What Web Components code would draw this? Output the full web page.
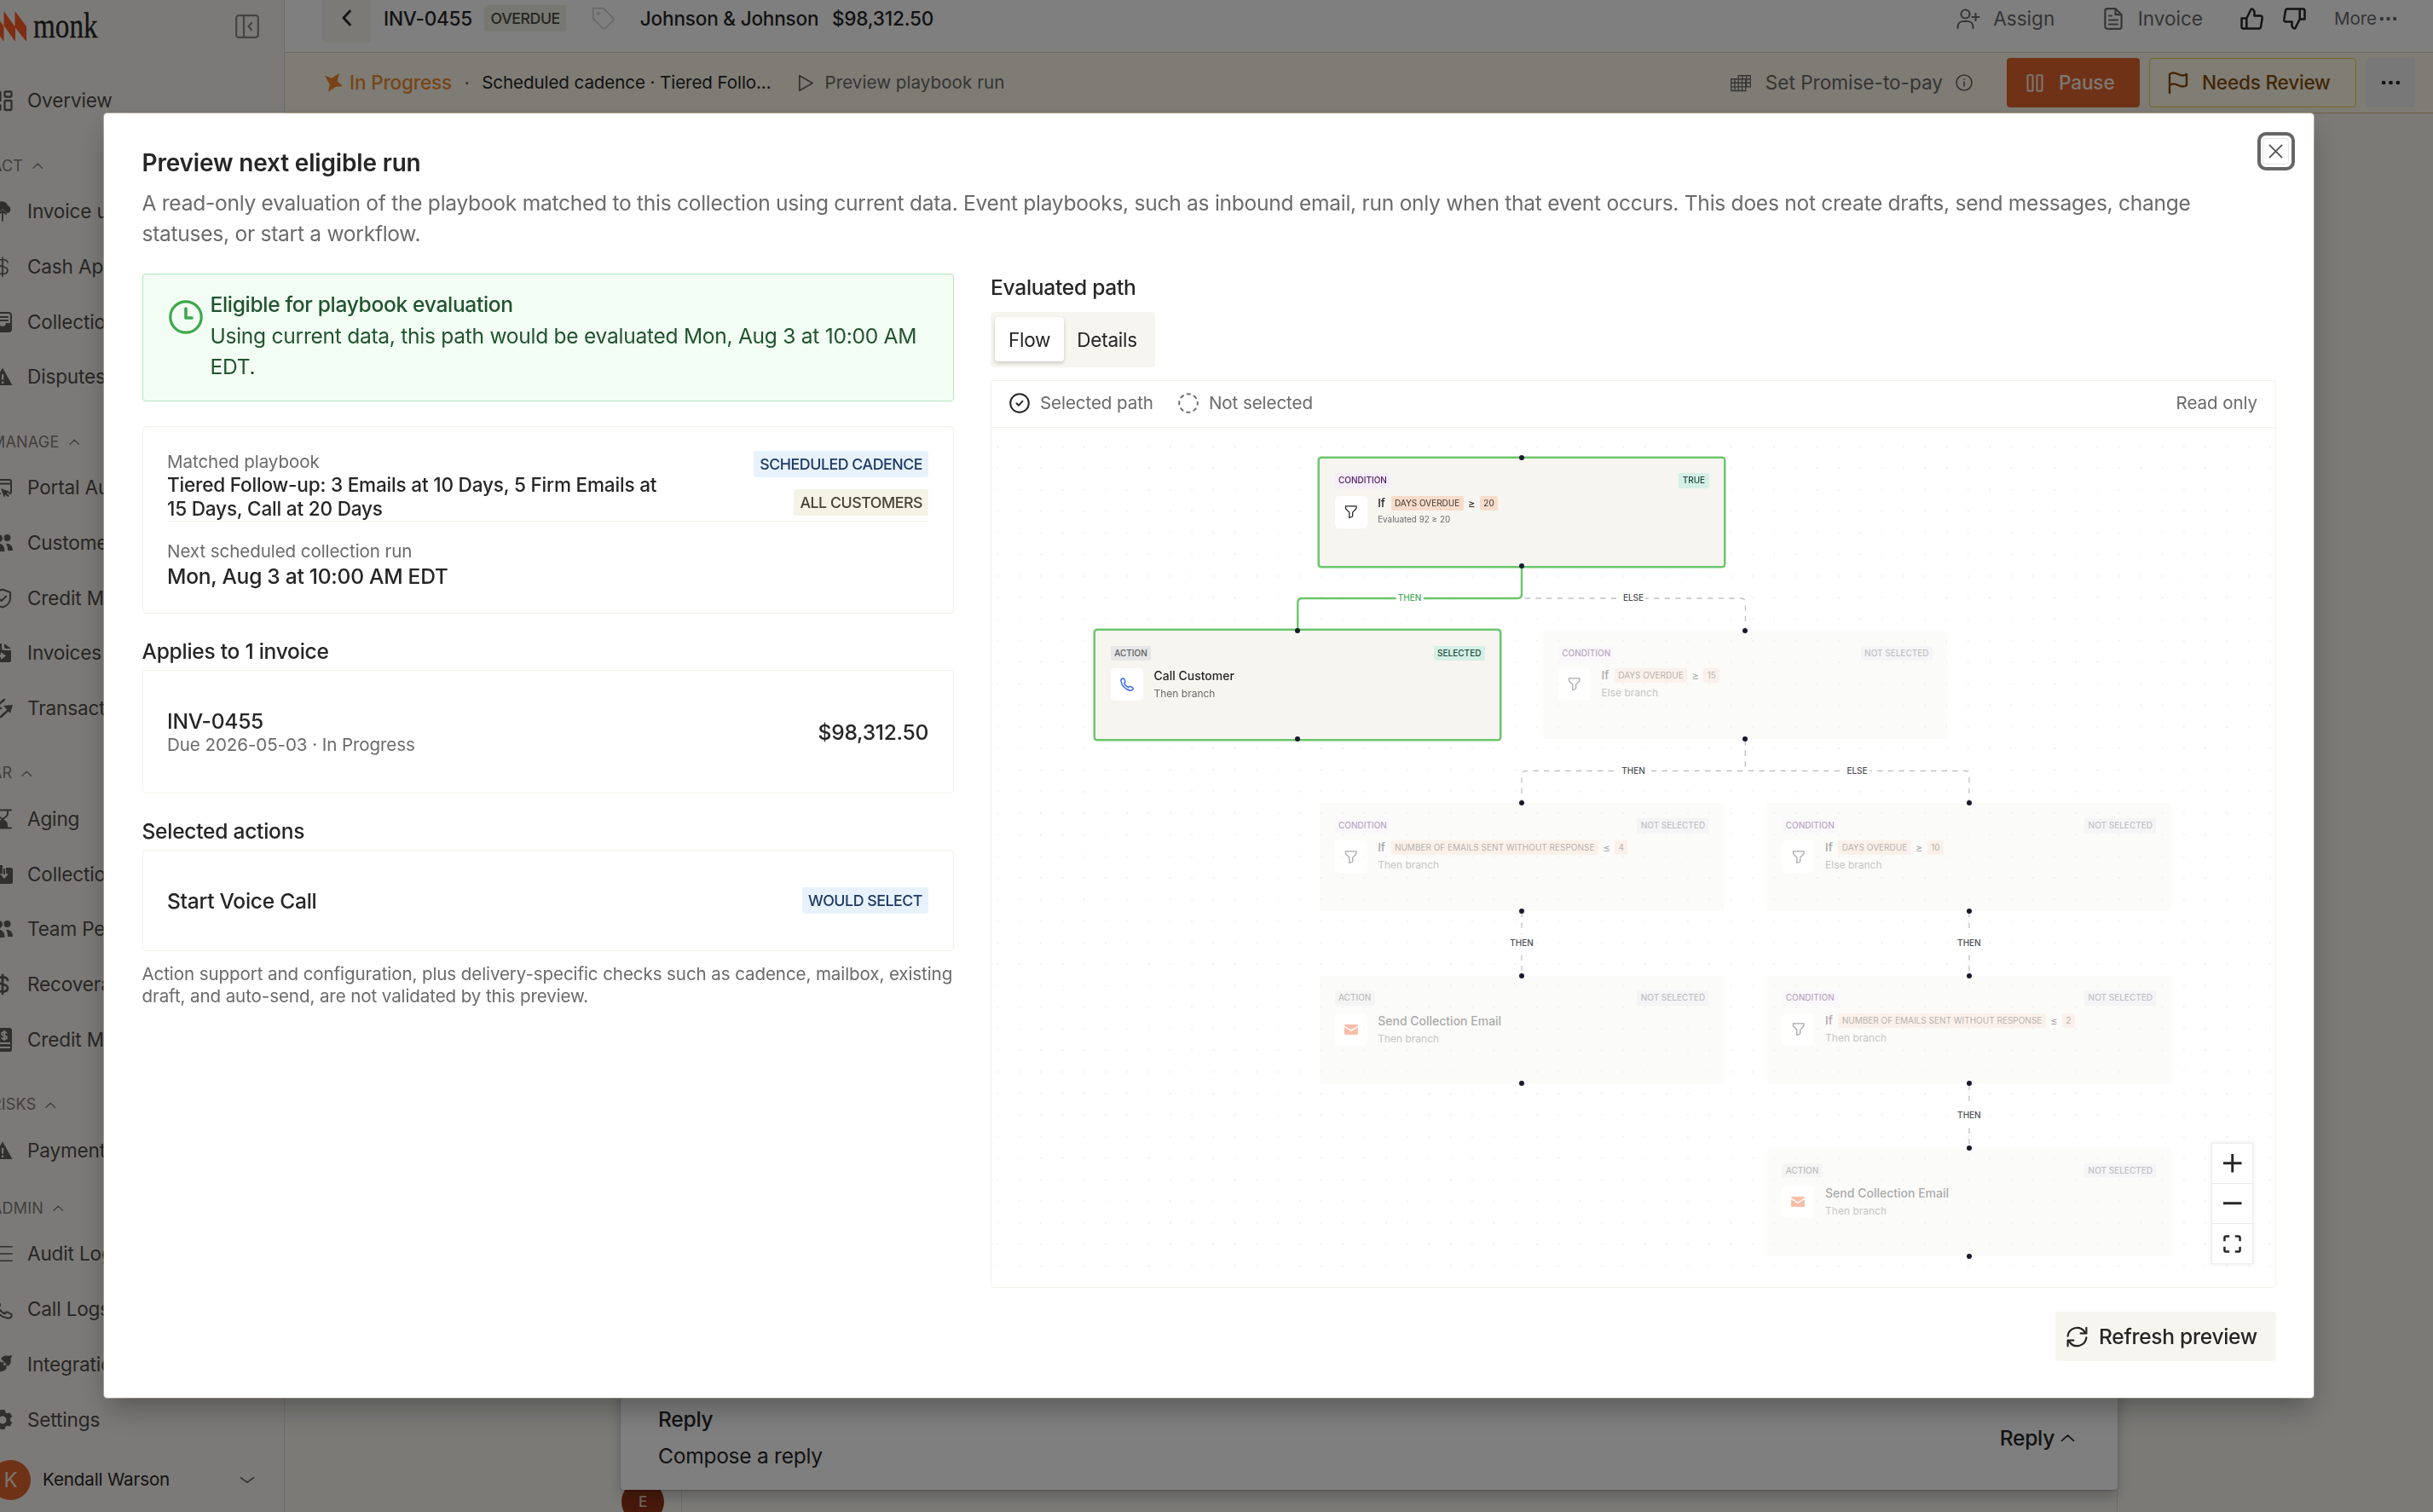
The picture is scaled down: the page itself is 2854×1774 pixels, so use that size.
<!DOCTYPE html>
<html lang="en">
<head>
<meta charset="utf-8">
<title>Monk</title>
<style>
  html, body { margin: 0; height: 100%; overflow: hidden; background: #f8f7f3; }
  body { font: 400 24.6px/36px Inter, sans-serif; letter-spacing: -.29px; color: #262626; }
</style>
</head>
<body>
<monk-app></monk-app>

<script>
/* Icon set: [viewBox, markup] */
const S = 'fill="none" stroke="currentColor" stroke-linecap="round" stroke-linejoin="round"';
const ICONS = {
  up: ['0 0 24 24', `<path ${S} stroke-width="2.6" d="M2 18 12 7l10 11"/>`],
  down: ['0 0 24 24', `<path ${S} stroke-width="3" d="M2 7l10 10L22 7"/>`],
  back: ['0 0 24 24', `<path ${S} stroke-width="2.8" d="M15.5 4 8 12l7.5 8"/>`],
  panel: ['0 0 28 28', `<g ${S} stroke-width="2.2"><rect x="1.2" y="1.2" width="25.6" height="25.6" rx="3"/><path d="M10 1.5v25M19 10l-3.5 4 3.5 4"/></g>`],
  grid: ['0 0 24 24', `<g ${S} stroke-width="2.3"><rect x="1.5" y="1.5" width="8" height="11" rx="1"/><rect x="14.5" y="1.5" width="8" height="6" rx="1"/><rect x="1.5" y="17" width="8" height="6" rx="1"/><rect x="14.5" y="12" width="8" height="11" rx="1"/></g>`],
  cloud: ['0 0 24 24', `<path fill="currentColor" d="M6 14a5 5 0 0 1-1-9.8A7 7 0 0 1 18 5a5 5 0 0 1 1 9h-2l-5-5-5 5z"/><path ${S} stroke-width="1.8" d="M12 23V11m-4 4 4-4 4 4"/>`],
  dollar: ['0 0 24 24', `<path ${S} stroke-width="1.7" d="M12 1v22M18 7c-.5-2-2.500-3.500-6-3.500S6 5 6 7.500c0 5.500 12 3 12 8.500 0 3-2.500 4.500-6 4.500S6 19 5.500 16.500"/>`],
  dollarBold: ['0 0 24 24', `<path ${S} stroke-width="2.800" d="M12 1v22M18 7c-.5-2-2.500-3.500-6-3.500S6 5 6 7.500c0 5.500 12 3 12 8.500 0 3-2.500 4.500-6 4.500S6 19 5.500 16.500"/>`],
  inbox: ['0 0 24 24', `<rect ${S} stroke-width="2" x="2" y="1" width="20" height="22" rx="3"/><path ${S} stroke-width="2" d="M6 6h12M6 10h12"/><path fill="currentColor" d="M2 13h6c1 3 2 4 4 4s3-1 4-4h6v8l-2 2H4l-2-2z"/>`],
  warn: ['0 0 24 24', `<path fill="currentColor" fill-rule="evenodd" d="M12 1.500 23.500 22H.5zM11 9v6.500h2.200V9zm0 8.500V20h2.200v-2.500z"/>`],
  browser: ['0 0 24 24', `<path ${S} stroke-width="2" d="M9 19H3a2 2 0 0 1-2-2V5a2 2 0 0 1 2-2h17a2 2 0 0 1 2 2v12a2 2 0 0 1-2 2M1 7.500h21"/><path fill="currentColor" d="m10 13 11 4-4 1.800 3 3-1.500 1.500-3-3L14 24z"/>`],
  people: ['0 0 24 24', `<g fill="currentColor"><circle cx="7.500" cy="6.500" r="4.500"/><circle cx="17.500" cy="6" r="4"/><path d="M0 22c0-6 3-9 7.500-9s7 3 7 9zM16 13c5-1 8 3 8 8h-6c0-4-.5-6-2-8z"/></g>`],
  shield: ['0 0 24 24', `<path ${S} stroke-width="2" d="m12 1.500 9 3.500v7c0 5-4 9-9 10.500C7 21 3 17 3 12V5zM7.500 12l3.200 3 5.500-5.500"/>`],
  files: ['0 0 24 24', `<path fill="currentColor" fill-rule="evenodd" d="M3 1h8v5c0 2 1 3 3 3h8v12c0 1-1 2-2 2H5c-1 0-2-1-2-2zm7 10v3H5v3h5v3l6-4.500zM14 1l8 6h-6c-1 0-2-1-2-2z"/>`],
  swap: ['0 0 24 24', `<g ${S} stroke-width="2.600"><path d="M2 12 14 2M3 5v7h7M10 22 21 12"/></g><path fill="currentColor" d="m13 9 11-1-3 10z"/>`],
  hourglass: ['0 0 24 24', `<g ${S} stroke-width="2"><path d="M2 1.500h20M2 22.500h20M6 2v3c0 4 3 5 6 7 3-2 6-3 6-7V2"/></g><path fill="currentColor" d="M12 12c4 2 6 3 6 8v2H6v-2c0-5 2-6 6-8z"/>`],
  collect: ['0 0 24 24', `<path fill="currentColor" fill-rule="evenodd" d="M2 4h5l2-3h3v10H9l5 6 5-6h-3V4h6c1 0 2 1 2 2v15c0 1-1 2-2 2H2c-1 0-2-1-2-2V6c0-1 1-2 2-2zm11 1h2v7h-2z"/>`],
  memo: ['0 0 24 28', `<path fill="currentColor" fill-rule="evenodd" d="M4 0h16a3 3 0 0 1 3 3v22a3 3 0 0 1-3 3H4a3 3 0 0 1-3-3V3a3 3 0 0 1 3-3zM4 17v2h17v-2zm0 5v2h17v-2z"/><path fill="none" stroke="#f5f2ed" stroke-width="1.800" d="M14 3v12M17 6.500C16.500 5.300 15.500 5 14 5s-3 .7-3 2c0 3 6 1.500 6 4.200 0 1.500-1.300 2-3 2s-2.700-.7-3-2"/>`],
  lines: ['0 0 24 24', `<path ${S} stroke-width="1.900" d="M1 3h22M1 12h22M1 21h22"/>`],
  phone: ['0 0 24 24', `<path ${S} stroke-width="2" d="M4.500 1.500C2.500 2 1 4 1.500 7 3 14.500 10 21.500 17.500 22.500c3 .4 5-1 5.300-3.200 0-.8-.3-1.400-.9-1.700l-4-2c-.8-.4-1.600-.2-2.100.4l-1.300 1.500C11.500 16 8.500 13 7 9.800l1.500-1.400c.5-.6.7-1.300.4-2L7 2.300c-.4-.8-1.400-1.100-2.500-.8z"/>`],
  plug: ['0 0 24 24', `<path fill="currentColor" d="M11 4c3-3 6-2.500 8-2l3-1 1 1-1.500 3c.5 2 1 5-2 8l-1 1L10 5z"/><path fill="currentColor" d="m8 7 3 3 1.500-1.500L14 10l-1.500 1.500 2 2L16 12l1.500 1.500-1.500 1.500 1 1c-3 4-6 5-9.500 4L4 23l-3-3 2.500-3.500C2.500 13 4 10 8 7z"/>`],
  gear: ['0 0 24 24', `<path fill="currentColor" fill-rule="evenodd" d="M9.500 0h5l1 3.200 2 1 3.200-.8 2.500 4.300-2.200 2.500v2.600l2.200 2.500-2.500 4.300-3.200-.8-2 1-1 3.200h-5l-1-3.200-2-1-3.200.8-2.500-4.300L3 12.800v-2.600L.8 7.700l2.500-4.300 3.200.8 2-1zM12 7.500a4.500 4.500 0 1 0 0 9 4.500 4.500 0 0 0 0-9z"/>`],
  tag: ['0 0 24 24', `<path ${S} stroke-width="1.500" d="M1.500 1.500h9.500c.8 0 1.500.3 2 .8l9 9c1 1 1 2.400 0 3.400l-7.300 7.300c-1 1-2.400 1-3.400 0l-9-9c-.5-.5-.8-1.200-.8-2z"/><circle cx="7" cy="7" r="1.700" fill="currentColor"/>`],
  assign: ['0 0 28 24', `<g ${S} stroke-width="2.200"><circle cx="10.500" cy="6.500" r="5"/><path d="M1.500 23v-1.500c0-4 3-6.500 7-6.500h4c4 0 7 2.500 7 6.500V23M22.500 6v8M18.500 10h8"/></g>`],
  doc: ['0 0 22 26', `<g ${S} stroke-width="2.200"><path d="M13.500 1.200H4a2.600 2.600 0 0 0-2.600 2.600v18.400A2.600 2.600 0 0 0 4 24.800h14a2.600 2.600 0 0 0 2.600-2.600V8.300zM13.500 1.200v7h7M6 9.500h3M6 14.500h10M6 19.500h10"/></g>`],
  thumb: ['0 0 27 26', `<path ${S} stroke-width="2.500" d="M1.500 12.500h5.800v12H3.500a2 2 0 0 1-2-2zM7.300 12.500 12.800 1.500c2 0 3.700 1.600 3.700 3.700V9.500h7c1.500 0 2.500 1.300 2.200 2.700l-1.700 10.400c-.2 1.100-1.100 1.900-2.200 1.900H7.300"/>`],
  star: ['0 0 22 22', `<path fill="currentColor" d="m1 2.500 8 3.200L18 0l-2.300 9L22 15l-8.500 1L5 22l1.800-9z"/>`],
  play: ['0 0 20 22', `<path ${S} stroke-width="2" d="M2 1.800 18 11 2 20.200z"/>`],
  calendar: ['0 0 24 18', `<g fill="none" stroke="currentColor" stroke-width="1.300"><path d="M.7 4.500h17v13h-17zM.7 8.800h17M.7 13.200h17M5 4.500v13M9.200 4.500v13M13.500 4.500v13M9.200 4.500V.7h14.100v12.500h-5.600M17.700 4.500h5.600M17.700 8.800h5.600M14 .7v4M18.700 .7v12"/></g>`],
  info: ['0 0 20 20', `<circle cx="10" cy="10" r="9" ${S} stroke-width="1.700"/><path ${S} stroke-width="1.700" d="M10 9v5M10 5.800v.2"/>`],
  pause: ['0 0 20 22', `<g ${S} stroke-width="2"><rect x="1.500" y="1.200" width="6" height="19.500" rx="1"/><rect x="12.500" y="1.200" width="6" height="19.500" rx="1"/></g>`],
  flag: ['0 0 24 26', `<path ${S} stroke-width="2.400" d="M2 25V3c3-2 6-2 10 0s7 2 10 0v13c-3 2-6 2-10 0s-7-2-10 0"/>`],
  dots: ['0 0 22 6', `<g fill="currentColor"><circle cx="3" cy="3" r="2.300"/><circle cx="11" cy="3" r="2.300"/><circle cx="19" cy="3" r="2.300"/></g>`],
  close: ['0 0 18 18', `<path ${S} stroke-width="2" d="m1.500 1.500 15 15m0-15-15 15"/>`],
  clock: ['0 0 40 40', `<circle cx="20" cy="20" r="18.200" ${S} stroke-width="3.200"/><path ${S} stroke-width="3.600" d="M20 10v11h7"/>`],
  check: ['0 0 24 24', `<circle cx="12" cy="12" r="10.800" ${S} stroke-width="2"/><path ${S} stroke-width="2" d="m8.500 12.300 2.500 2.400 4.500-5"/>`],
  dashed: ['0 0 24 24', `<circle cx="12" cy="12" r="10.800" fill="none" stroke="currentColor" stroke-width="1.900" stroke-dasharray="5 3.480" stroke-dashoffset="2.500"/>`],
  funnel: ['0 0 16 16', `<path ${S} stroke-width="1.300" d="M1.500 1h13v1.800c0 .8-.3 1.300-.8 1.800L10 8.400v5L6 15V8.400L2.300 4.600c-.5-.5-.8-1-.8-1.800z"/>`],
  mail: ['0 0 16 12', `<path fill="currentColor" d="M1.500 0h13c.8 0 1.500.6 1.500 1.400L8 6.200 0 1.400C0 .6.700 0 1.500 0z"/><path fill="currentColor" d="M0 3.200 8 8l8-4.800v7.300c0 .8-.7 1.500-1.500 1.500h-13C.7 12 0 11.300 0 10.500z"/>`],
  refresh: ['0 0 26 26', `<g ${S} stroke-width="2.300"><path d="M24.300 1.800v7h-7M1.700 24.200v-7h7"/><path d="M1.700 12A11.300 11.300 0 0 1 22 6.500l2 2M24.300 14A11.300 11.300 0 0 1 4 19.500l-2-2"/></g>`],
  plus: ['0 0 22 22', `<path fill="none" stroke="currentColor" stroke-width="3" d="M11 0v22M0 11h22"/>`],
  minus: ['0 0 22 22', `<path fill="none" stroke="currentColor" stroke-width="3" d="M0 11h22"/>`],
  expand: ['0 0 22 22', `<path fill="none" stroke="currentColor" stroke-width="2.600" d="M1.500 7.500v-4q0-2 2-2h4M14.500 1.500h4q2 0 2 2v4M20.500 14.500v4q0 2-2 2h-4M7.500 20.500h-4q-2 0-2-2v-4"/>`],
  logo: ['0 0 39 36', `<path fill="currentColor" d="M0 0l12.500 18v18L0 18zM12.500 0 26 19v17L12.500 17zM25.500 0 39 18v18L25.500 19z"/>`],
};

class Base extends HTMLElement {
  connectedCallback() {
    if (this.shadowRoot) return;
    this.attachShadow({ mode: 'open' }).innerHTML =
      `<style>*{box-sizing:border-box}:host{box-sizing:border-box}${this.css()}</style>${this.html()}`;
  }
  a(n, d = '') { return this.getAttribute(n) ?? d; }
  css() { return ''; }
  html() { return '<slot></slot>'; }
}
const def = (n, c) => customElements.define(n, c);

/* <ui-icon name w h> */
def('ui-icon', class extends Base {
  css() { return `:host{display:block;flex:none;width:${this.a('w', 24)}px;height:${this.a('h', this.a('w', 24))}px}svg{display:block;width:100%;height:100%;overflow:visible}`; }
  html() { const [vb, m] = ICONS[this.a('name')]; return `<svg viewBox="${vb}" preserveAspectRatio="none">${m}</svg>`; }
});

/* Uppercase pill label */
def('ui-badge', class extends Base {
  css() {
    const [bg, fg] = { blue: ['#e8f2fd', '#1e3a63'], olive: ['#f4f3e6', '#45463a'], grey: ['#eff0e3', '#4b4d42'] }[this.a('tone')];
    return `:host{display:block;flex:none;height:31px;padding:0 7px 0 7.500px;border-radius:3px;background:${bg};color:${fg};font:500 17.800px/31px Inter,sans-serif;letter-spacing:-.48px;white-space:nowrap}`;
  }
});

/* ---------- Sidebar ---------- */
def('nav-item', class extends Base {
  css() { return `:host{display:flex;align-items:center;height:64.750px;margin-left:-9px;color:#5f5e5b}
    ui-icon{margin-right:17px}span{font:400 22.600px/30px Inter,sans-serif;letter-spacing:-.17px;color:#4f4e4b;white-space:nowrap}`; }
  html() { return `<ui-icon name="${this.a('icon')}" w="24" h="${this.a('ih', 24)}"></ui-icon><span><slot></slot></span>`; }
});
def('nav-group', class extends Base {
  css() { return `:host{display:block}
    .h{display:flex;align-items:center;gap:11px;height:57px;padding-top:14.500px;margin-left:-10px;color:#81807b;font:400 18px/24px Inter,sans-serif;letter-spacing:.2px}`; }
  html() { return `<div class="h"><span>${this.a('label')}</span><ui-icon name="up" w="12.500" h="11"></ui-icon></div><slot></slot>`; }
});
def('app-sidebar', class extends Base {
  css() { return `:host{display:flex;flex-direction:column;flex:none;width:334px;height:1774px;background:#f9f5f0;border-right:1px solid #dedbd3;overflow:hidden}
    .top{display:flex;align-items:center;height:62px;padding-right:29px}
    .logo{color:#ff5a24;margin-left:-8px}
    .name{flex:1;font:400 42px/44px "Liberation Serif",serif;letter-spacing:0;color:#262626}
    .name b{display:inline-block;font-weight:400;transform:translateY(-1px) scaleX(.79);transform-origin:0 50%;margin-left:7.500px;-webkit-text-stroke:.35px #262626}
    .col{color:#8a8985}
    nav{margin-top:24px}
    .sp{margin-top:8px}
    .user{display:flex;align-items:center;height:47px;margin:14.500px 34px 0 -11px;font:400 20.600px/30px Inter,sans-serif;letter-spacing:-.14px;color:#262626}
    .av{width:47px;height:47px;border-radius:50%;background:#e0642c;color:#f5e8e0;text-align:center;font:400 24px/47px Inter,sans-serif;margin-right:14px}
    .user span{flex:1}`; }
  html() {
    const it = (i, t, h = 24) => `<nav-item icon="${i}" ih="${h}">${t}</nav-item>`;
    return `<div class="top"><ui-icon class="logo" name="logo" w="39" h="36"></ui-icon><span class="name"><b>monk</b></span><ui-icon class="col" name="panel" w="28"></ui-icon></div>
    <nav>${it('grid', 'Overview')}
    <nav-group class="sp" label="ACT">${it('cloud', 'Invoice uploads')}${it('dollar', 'Cash Application')}${it('inbox', 'Collections')}${it('warn', 'Disputes')}</nav-group>
    <nav-group class="sp" label="MANAGE">${it('browser', 'Portal Automation')}${it('people', 'Customers')}${it('shield', 'Credit Management')}${it('files', 'Invoices')}${it('swap', 'Transactions')}</nav-group>
    <nav-group class="sp" label="AR">${it('hourglass', 'Aging')}${it('collect', 'Collections')}${it('people', 'Team Performance')}${it('dollarBold', 'Recoverables')}${it('memo', 'Credit Memos', 28)}</nav-group>
    <nav-group class="sp" label="RISKS">${it('warn', 'Payment Risk')}</nav-group>
    <nav-group label="ADMIN">${it('lines', 'Audit Logs', 22)}${it('phone', 'Call Logs')}${it('plug', 'Integrations')}${it('gear', 'Settings')}</nav-group></nav>
    <div class="user"><div class="av">K</div><span>Kendall Warson</span><ui-icon name="down" w="18" h="13" style="color:#6a6966"></ui-icon></div>`;
  }
});

/* ---------- Page header ---------- */
def('page-header', class extends Base {
  css() { return `:host{display:block;flex:none}
    .r{display:flex;align-items:center;white-space:nowrap}
    .a{height:62px;background:#fff;border-bottom:1px solid #dccfb8;font:500 22.600px/30px Inter,sans-serif;letter-spacing:-.22px;padding:0 42px 18px 44px;color:#262626}
    .back{width:57px;height:64px;margin-top:-8px;padding-top:6px;display:flex;align-items:center;justify-content:center;background:#f6f4ef;border-radius:4px;margin-right:15px}
    .mut{color:#6b6b6b;font-weight:400;letter-spacing:-.02px}
    .b{height:71px;background:#fdf8ea;border-bottom:1px solid #e5bf8c;font:400 22.600px/30px Inter,sans-serif;padding:0 21px 0 46px;color:#262626}
    .s{font-size:20.600px;letter-spacing:-.1px}
    .f{flex:1}
    .pause,.rev,.m{display:flex;align-items:center;height:58px;border-radius:4px}
    .pause{background:#e0642c;color:#fbeee7;width:156px;padding-left:23px;font-weight:500;letter-spacing:-.15px}
    .rev{width:243px;margin-left:11px;padding-left:21px;border:1px solid #e8d43c;background:#fffbe9;color:#854d0e;font-weight:500;letter-spacing:-.22px}
    .m{width:58px;margin-left:11px;justify-content:center;background:#f1f1f3}`; }
  html() { return `<div class="r a"><div class="back"><ui-icon name="back" w="24"></ui-icon></div><span>INV-0455</span>
      <ui-badge tone="grey" style="margin-left:14px">OVERDUE</ui-badge>
      <ui-icon name="tag" w="27" h="27" style="margin:0 30px 0 30px;color:#cfcfd4"></ui-icon>
      <span>Johnson &amp; Johnson</span><span style="margin-left:15.500px">$98,312.50</span><span class="f"></span>
      <ui-icon name="assign" w="28" h="24" style="color:#6b6b6b;margin-right:15.500px"></ui-icon><span class="mut">Assign</span>
      <ui-icon name="doc" w="22" h="26" style="color:#6b6b6b;margin:0 18px 0 57.500px"></ui-icon><span class="mut">Invoice</span>
      <ui-icon name="thumb" w="27" h="26" style="margin-left:44px"></ui-icon><ui-icon name="thumb" w="27" h="26" style="margin:0 33px 0 23px;transform:rotate(180deg)"></ui-icon>
      <span class="mut s">More</span><ui-icon name="dots" w="21" h="6" style="color:#6b6b6b;margin-left:3px"></ui-icon></div>
    <div class="r b"><ui-icon name="star" w="22" style="color:#f0862c;margin-right:8px"></ui-icon><span style="color:#ef8b33;font-weight:500;letter-spacing:-.2px">In Progress</span>
      <span style="margin:0 14.500px;color:#6b6b6b">·</span><span class="s">Scheduled cadence · Tiered Follo...</span>
      <ui-icon name="play" w="19" h="21" style="color:#6b6b6b;margin:0 13px 0 31px"></ui-icon><span class="mut s" style="letter-spacing:.04px">Preview playbook run</span><span class="f"></span>
      <ui-icon name="calendar" w="24" h="19" style="color:#6b6b6b;margin-right:17px"></ui-icon><span class="mut">Set Promise-to-pay</span><ui-icon name="info" w="20" style="color:#6b6b6b;margin:0 40px 0 15px"></ui-icon>
      <div class="pause"><ui-icon name="pause" w="20" h="21" style="margin-right:18px"></ui-icon>Pause</div>
      <div class="rev"><ui-icon name="flag" w="24" h="26" style="margin-right:16px"></ui-icon>Needs Review</div>
      <div class="m"><ui-icon name="dots" w="23" h="6"></ui-icon></div></div>`; }
});

/* ---------- Reply composer at the foot of the page ---------- */
def('reply-dock', class extends Base {
  css() { return `:host{display:flex;flex-direction:column;flex:1;justify-content:flex-end;padding:0 0 0 394px}
    .card{width:1756px;height:158px;display:flex;justify-content:space-between;background:#fff;border-radius:0 0 4px 4px;box-shadow:0 8px 16px rgba(0,0,0,.22),0 1px 2px rgba(0,0,0,.2);padding:0 50px 0 44px;z-index:1;position:relative}
    .l{padding-top:54px;line-height:43px}.l div:first-child{font-weight:500}
    .rr{display:flex;align-items:center;gap:7px;height:30px;margin-top:82px;font-weight:500}
    .t{display:flex;height:26px;width:1756px}
    .av{width:50px;height:50px;border-radius:50%;background:#8f3216;color:#e8cfc5;text-align:center;font:500 17px/50px Inter,sans-serif;margin-top:-11px;margin-left:1px}
    .box{flex:1;margin-left:20px;border:solid #dcdad0;border-width:0 1px}`; }
  html() { return `<div class="card"><div class="l"><div>Reply</div><div>Compose a reply</div></div><div class="rr">Reply<ui-icon name="up" w="17" h="14"></ui-icon></div></div>
    <div class="t"><div class="av">E</div><div class="box"></div></div>`; }
});

/* ---------- Modal: left column ---------- */
def('status-banner', class extends Base {
  css() { return `:host{display:flex;height:150px;border:1px solid #b4e6be;border-radius:4px;background:#f2fdf4;padding:16.500px 20px 0 30px;color:#22532f;line-height:36px}
    ui-icon{color:#3da84c;margin:13.500px 9px 0 0}b{display:block;font-weight:500;margin-bottom:1px;letter-spacing:-.34px}p{margin:0}`; }
  html() { return `<ui-icon name="clock" w="40"></ui-icon><div><b>${this.a('heading')}</b><p><slot></slot></p></div>`; }
});
def('info-card', class extends Base {
  css() { return `:host{display:block;border:1px solid #f3f2e9;border-radius:4px;padding:0 28.500px}`; }
});
def('left-column', class extends Base {
  css() { return `:host{display:block;width:952px;flex:none}
    .mut{color:#6b6b6b;font:400 20.600px/28px Inter,sans-serif;letter-spacing:-.1px}
    .med{font-weight:500;letter-spacing:-.28px}h3{margin:0;font:500 24.600px/32px Inter,sans-serif;letter-spacing:-.28px}
    .m{display:flex;justify-content:space-between;border-bottom:1px solid #f3f2e9;height:111px;padding-top:28px}
    .ti{font:500 22.600px/28px Inter,sans-serif;letter-spacing:-.21px;width:590px}
    .bs{display:flex;flex-direction:column;align-items:flex-end;gap:14px}
    .row{display:flex;justify-content:space-between;align-items:center}
    .note{font:400 20.600px/26px Inter,sans-serif;letter-spacing:-.115px;color:#6b6b6b;margin-top:13.500px;white-space:nowrap}`; }
  html() { return `<status-banner heading="Eligible for playbook evaluation">Using current data, this path would be evaluated Mon, Aug 3 at 10:00 AM EDT.</status-banner>
    <info-card style="height:220px;margin-top:29px"><div class="m"><div style="margin-top:-1px"><div class="mut" style="line-height:27px">Matched playbook</div><div class="ti">Tiered Follow-up: 3 Emails at 10 Days, 5 Firm Emails at 15 Days, Call at 20 Days</div></div>
      <div class="bs"><ui-badge tone="blue">SCHEDULED CADENCE</ui-badge><ui-badge tone="olive">ALL CUSTOMERS</ui-badge></div></div>
      <div class="mut" style="margin-top:21px">Next scheduled collection run</div><div class="med" style="line-height:30px;margin-top:-.500px">Mon, Aug 3 at 10:00 AM EDT</div></info-card>
    <h3 style="margin-top:28px">Applies to 1 invoice</h3>
    <info-card style="height:145px;margin-top:6px"><div class="row" style="height:143px"><div><div class="med" style="line-height:30px">INV-0455</div><div class="mut" style="line-height:26px">Due 2026-05-03 · In Progress</div></div><span class="med">$98,312.50</span></div></info-card>
    <h3 style="margin-top:28px">Selected actions</h3>
    <info-card style="height:119px;margin-top:6px"><div class="row" style="height:117px"><span class="med">Start Voice Call</span><ui-badge tone="blue">WOULD SELECT</ui-badge></div></info-card>
    <div class="note">Action support and configuration, plus delivery-specific checks such as cadence, mailbox, existing<br>draft, and auto-send, are not validated by this preview.</div>`; }
});

/* ---------- Modal: flow diagram ---------- */
def('flow-node', class extends Base {
  css() {
    const off = this.hasAttribute('off');
    return `:host{position:absolute;left:${this.a('cx') - 237}px;top:${this.a('y')}px;width:474px;height:126.500px;letter-spacing:0}
    .n{height:100%;padding:17.500px 17.500px 0;border-radius:2px;background:#f6f5f0;${off ? 'opacity:.4' : 'box-shadow:0 0 0 2.500px #6cc66c'}}
    .top,.row,.cond{display:flex;align-items:flex-start}.top{justify-content:space-between}
    .b{height:17.700px;padding:0 4.400px;border-radius:2px;font:500 10px/17.700px Inter,sans-serif;background:#e6e6e6;color:#5c5c5c;white-space:nowrap}
    .b.c{background:#f5edf8;color:#4d1a5e}.b.t{background:#d5f0e6;color:#1c4a3a}.b.x{background:#e6e7ea;color:#5f6062}
    .row{margin-top:8.800px}
    .ic{width:38px;height:38px;border-radius:5px;background:#fff;display:flex;align-items:center;justify-content:center;margin-right:12.700px;color:#262626}
    .cond{align-items:center;gap:6.500px;height:17px;font-size:13.500px;line-height:17px}
    .v{height:17px;padding:0 4.400px;border-radius:2px;background:#f8dccb;font:400 10px/17px Inter,sans-serif;color:#3d3532;white-space:nowrap}
    .o{font-size:13px;margin:0 -1.200px}
    .ti{font:500 14px/18px Inter,sans-serif}
    .s{font:400 12px/16px Inter,sans-serif;color:#6b6b6b;margin-top:4px}
    .e{font-size:9.900px;margin-top:2px}
    i{position:absolute;left:50%;width:6px;height:6px;margin-left:-3px;border-radius:50%;background:#1a1a2e}`;
  }
  html() {
    const off = this.hasAttribute('off'), c = this.a('kind') === 'c', v = this.a('cond').split('|');
    return `<div class="n"><div class="top"><span class="b ${c ? 'c' : ''}">${c ? 'CONDITION' : 'ACTION'}</span><span class="b ${off ? 'x' : 't'}">${off ? 'NOT SELECTED' : this.a('state')}</span></div>
    <div class="row"><div class="ic">${c ? '<ui-icon name="funnel" w="15.500"></ui-icon>' : this.a('icon') === 'phone' ? '<ui-icon name="phone" w="16" style="color:#2a5bf0"></ui-icon>' : '<ui-icon name="mail" w="16" h="12" style="color:#ee5a24"></ui-icon>'}</div>
    <div>${c ? `<div class="cond"><span style="font-weight:500">If</span><span class="v">${v[0]}</span><span class="o">${v[1]}</span><span class="v">${v[2]}</span></div>` : `<div class="ti">${this.a('label')}</div>`}
    <div class="s ${this.hasAttribute('ev') ? 'e' : ''}"><slot></slot></div></div></div></div>
    <i style="top:${off ? -3 : -3.500}px"></i><i style="bottom:-3px"></i>`;
  }
});
def('flow-canvas', class extends Base {
  css() { return `:host{display:block;position:relative;flex:1;overflow:hidden;letter-spacing:0;background:radial-gradient(circle at 12.650px 12.650px,#ececee 0 .6px,transparent 1px) -5.200px 9.400px/25.300px 25.300px}
    .w{position:absolute;left:-1163px;top:-502px;width:2854px;height:1774px}
    svg{position:absolute;inset:0}
    .l{position:absolute;transform:translate(-50%,-50%);background:#fff;padding:0 2.500px;font:500 10px/20px Inter,sans-serif;color:#4d4d53}
    .g{color:#4aa95c;line-height:12px}
    .z{position:absolute;right:26px;bottom:26.500px;width:49px;height:142px;background:#fff;border:1px solid #eee;box-shadow:0 0 4px 1px rgba(0,0,0,.08);display:flex;flex-direction:column}
    .z div{flex:1;display:flex;align-items:center;justify-content:center}.z div+div{border-top:1px solid #e8e8e8}`; }
  html() {
    const X = [1522.300, 1785, 2047.400, 2309.900], Y = [538.100, 740.500, 942.900, 1145.300, 1347.700];
    const N = (x, y, a, t) => `<flow-node cx="${X[x]}" y="${Y[y]}" ${a}>${t}</flow-node>`;
    const L = (x, y, t, g = '') => `<span class="l ${g}" style="left:${x}px;top:${y}px">${t}</span>`;
    const d = 'fill="none" stroke="#c2c2c6" stroke-width="1.300" stroke-dasharray="6.300 6.300"';
    const elbow = (x1, y1, x2, y2) => { const m = (y1 + y2) / 2, s = x2 > x1 ? 1 : -1; return `M${x1} ${y1}V${m - 5}Q${x1} ${m} ${x1 + 5 * s} ${m}H${x2 - 5 * s}Q${x2} ${m} ${x2} ${m + 5}V${y2}`; };
    return `<div class="w"><svg width="2854" height="1774">
      <path d="${elbow(2047.400, 868, 1785, 941)}" ${d}/><path d="${elbow(2047.400, 868, 2309.900, 941)}" ${d}/><path d="${elbow(1785, 666, 2047.400, 738)}" ${d}/>
      <path d="${elbow(1785, 666, 1522.300, 738)}" fill="none" stroke="#6cc66c" stroke-width="2.400"/>
      <path d="M1785 1070V1143M2309.900 1070V1143M2309.900 1273V1346" ${d}/></svg>
      ${L(1653.600, 701.500, 'THEN', 'g')}${L(1916, 701.500, 'ELSE')}${L(1916, 904.500, 'THEN')}${L(2178.500, 904.500, 'ELSE')}${L(1785, 1106.500, 'THEN')}${L(2309.900, 1106.500, 'THEN')}${L(2309.900, 1308.800, 'THEN')}
      ${N(1, 0, 'kind="c" cond="DAYS OVERDUE|≥|20" state="TRUE" ev', 'Evaluated 92 ≥ 20')}
      ${N(0, 1, 'kind="a" icon="phone" label="Call Customer" state="SELECTED"', 'Then branch')}
      ${N(2, 1, 'kind="c" off cond="DAYS OVERDUE|≥|15"', 'Else branch')}
      ${N(1, 2, 'kind="c" off cond="NUMBER OF EMAILS SENT WITHOUT RESPONSE|≤|4"', 'Then branch')}
      ${N(3, 2, 'kind="c" off cond="DAYS OVERDUE|≥|10"', 'Else branch')}
      ${N(1, 3, 'kind="a" off label="Send Collection Email"', 'Then branch')}
      ${N(3, 3, 'kind="c" off cond="NUMBER OF EMAILS SENT WITHOUT RESPONSE|≤|2"', 'Then branch')}
      ${N(3, 4, 'kind="a" off label="Send Collection Email"', 'Then branch')}</div>
      <div class="z"><div><ui-icon name="plus" w="21.500"></ui-icon></div><div><ui-icon name="minus" w="21.500"></ui-icon></div><div><ui-icon name="expand" w="21"></ui-icon></div></div>`;
  }
});
def('path-column', class extends Base {
  css() { return `:host{display:flex;flex-direction:column;flex:1}
    h3{margin:0;font:500 24.600px/32px Inter,sans-serif}
    .tabs{display:flex;width:193px;height:64.500px;margin-top:13px;padding:6px 5px;background:#f6f5f0;border-radius:4px;font:400 22.600px/50px Inter,sans-serif}
    .tabs div{height:52px;padding:2px 16px 0}.tabs .on{background:#fff;border-radius:4px;box-shadow:0 2px 4px rgba(0,0,0,.18)}.tabs div+div{padding-left:15px}
    .p{display:flex;flex-direction:column;margin-top:15px;height:1065px;border:1px solid #f3f2e9;border-radius:4px;overflow:hidden}
    .h{display:flex;align-items:center;height:55px;padding:0 21px 1px;border-bottom:1px solid #f3f2e9;color:#6b6b6b;font:400 20.600px/28px Inter,sans-serif;letter-spacing:-.1px}
    .h ui-icon{margin-right:12px}`; }
  html() { return `<h3>Evaluated path</h3><div class="tabs"><div class="on">Flow</div><div>Details</div></div>
    <div class="p"><div class="h"><ui-icon name="check" w="24" style="color:#262626"></ui-icon><span>Selected path</span><ui-icon name="dashed" w="24" style="margin-left:29px"></ui-icon><span>Not selected</span><span style="flex:1"></span><span>Read only</span></div>
    <flow-canvas></flow-canvas></div>`; }
});
def('preview-dialog', class extends Base {
  css() { return `:host{position:fixed;left:122px;top:133px;width:2592px;height:1507px;background:#fff;border-radius:4px;box-shadow:0 16px 32px -4px rgba(0,0,0,.3),0 0 0 1px rgba(230,228,205,.5);padding:41px 44px 0 44.500px;display:flex;flex-direction:column}
    .hd{display:flex;justify-content:space-between}
    h2{margin:0 0 12px;font:600 28px/34px Inter,sans-serif;letter-spacing:-.17px}
    p{margin:0;color:#6b6b6b;line-height:36px;width:2440px}
    .x{width:44px;height:45px;margin:-19px -21.500px 0 0;border:4px solid #666;border-radius:10px;display:flex;align-items:center;justify-content:center;color:#555;flex:none}
    .x div{width:31px;height:31px;border:1px solid #e4e4e0;border-radius:4px;display:flex;align-items:center;justify-content:center}
    .bd{display:flex;gap:43.500px;margin-top:29px}
    .ft{display:flex;justify-content:flex-end;margin-top:28.500px}
    button{display:flex;align-items:center;gap:13px;width:259px;height:58px;padding:0 0 0 13px;border:0;border-radius:4px;background:#f6f5f0;color:#262626;font:500 24.600px/36px Inter,sans-serif;letter-spacing:-.3px}`; }
  html() { return `<div class="hd"><div><h2>Preview next eligible run</h2><p>A read-only evaluation of the playbook matched to this collection using current data. Event playbooks, such as inbound email, run only when that event occurs. This does not create drafts, send messages, change statuses, or start a workflow.</p></div><div class="x"><div><ui-icon name="close" w="17"></ui-icon></div></div></div>
    <div class="bd"><left-column></left-column><path-column></path-column></div>
    <div class="ft"><button><ui-icon name="refresh" w="25"></ui-icon>Refresh preview</button></div>`; }
});

def('monk-app', class extends Base {
  css() { return `:host{display:flex;height:1774px;width:2854px}
    main{flex:1;display:flex;flex-direction:column;background:#f6f5ef;min-width:0;isolation:isolate}
    .scrim{position:fixed;inset:0;background:rgba(0,0,0,.5)}`; }
  html() { return `<app-sidebar></app-sidebar><main><page-header></page-header><reply-dock></reply-dock></main><div class="scrim"></div><preview-dialog></preview-dialog>`; }
});
</script>
</body>
</html>
